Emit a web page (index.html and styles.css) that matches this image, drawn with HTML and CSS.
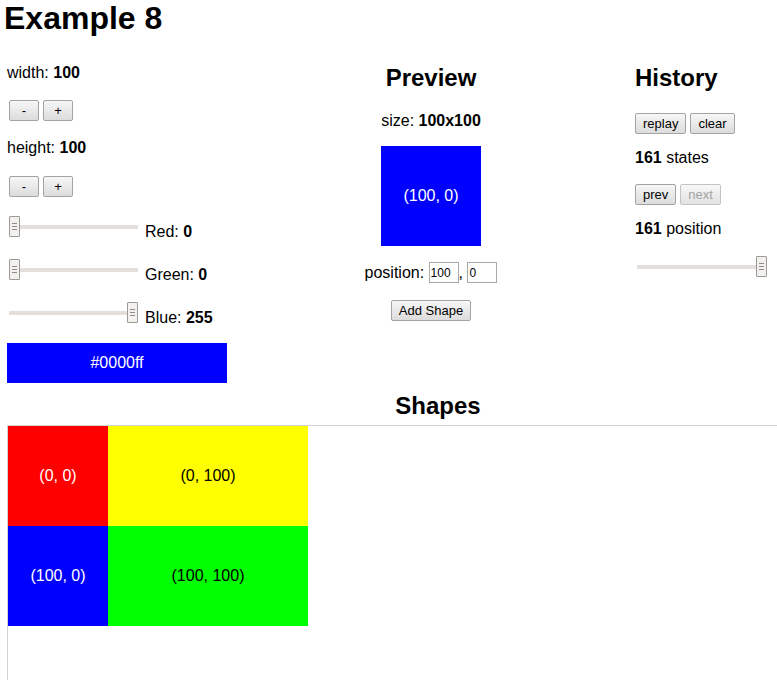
FILE: index.html
```html
<!DOCTYPE html>
<html lang="en">
<head>
<meta charset="utf-8">
<title>Example 8</title>
<link rel="stylesheet" href="styles.css">
</head>
<body>
<h1 class="title">Example 8</h1>
<div class="controls">
  <div class="col col-left">
    <p class="line">width: <b>100</b></p>
    <div class="btns btns-inset">
      <button class="btn btn-fixed">-</button>
      <button class="btn btn-fixed">+</button>
    </div>
    <p class="line gap-18">height: <b>100</b></p>
    <div class="btns btns-inset gap-19">
      <button class="btn btn-fixed">-</button>
      <button class="btn btn-fixed">+</button>
    </div>
    <div class="slider-row gap-19">
      <input class="range" type="range" min="0" max="255" value="0">
      <span class="slider-label">Red: <b>0</b></span>
    </div>
    <div class="slider-row gap-22">
      <input class="range" type="range" min="0" max="255" value="0">
      <span class="slider-label">Green: <b>0</b></span>
    </div>
    <div class="slider-row gap-22">
      <input class="range" type="range" min="0" max="255" value="255">
      <span class="slider-label">Blue: <b>255</b></span>
    </div>
    <div class="swatch">#0000ff</div>
  </div>

  <div class="col col-center">
    <h2 class="heading">Preview</h2>
    <p class="line gap-20">size: <b>100x100</b></p>
    <div class="preview-box">(100, 0)</div>
    <div class="position-row">
      <span>position:&nbsp;</span><input class="num" type="text" value="100"><span>,&nbsp;</span><input class="num" type="text" value="0">
    </div>
    <button class="btn add-btn">Add Shape</button>
  </div>

  <div class="col col-right">
    <h2 class="heading">History</h2>
    <div class="btns gap-21">
      <button class="btn">replay</button>
      <button class="btn">clear</button>
    </div>
    <p class="line gap-15"><b>161</b> states</p>
    <div class="btns gap-17">
      <button class="btn">prev</button>
      <button class="btn" disabled>next</button>
    </div>
    <p class="line gap-15"><b>161</b> position</p>
    <input class="range range-history" type="range" min="0" max="161" value="161">
  </div>
</div>

<section class="shapes">
  <h2 class="heading shapes-heading">Shapes</h2>
  <div class="canvas">
    <div class="shape shape-light" style="top:0;left:0;width:100px;height:100px;background:#ff0000">(0, 0)</div>
    <div class="shape shape-dark" style="top:0;left:100px;width:200px;height:100px;background:#ffff00">(0, 100)</div>
    <div class="shape shape-light" style="top:100px;left:0;width:100px;height:100px;background:#0000ff">(100, 0)</div>
    <div class="shape shape-dark" style="top:100px;left:100px;width:200px;height:100px;background:#00ff00">(100, 100)</div>
  </div>
</section>
</body>
</html>
```

FILE: styles.css
```css
html, body {
  margin: 0;
  padding: 0;
  background: #ffffff;
  overflow: hidden;
}

body {
  font-family: "Liberation Sans", Arial, sans-serif;
  font-size: 16px;
  color: #000;
}

.title {
  margin: 0;
  padding-left: 4px;
  font-size: 32px;
  font-weight: bold;
  line-height: 37px;
}

.controls {
  display: grid;
  grid-template-columns: 220px 200px 1fr;
  column-gap: 104px;
  margin-top: 27px;
  padding-left: 7px;
}

.col {
  display: flex;
  flex-direction: column;
  align-items: flex-start;
}

.col-center {
  align-items: center;
  text-align: center;
}

.line {
  margin: 0;
  height: 18px;
  line-height: 18px;
  white-space: nowrap;
}

.heading {
  margin: 0;
  font-size: 24px;
  font-weight: bold;
  line-height: 28px;
}

.gap-15 { margin-top: 15px; }
.gap-17 { margin-top: 17px; }
.gap-18 { margin-top: 18px; }
.gap-19 { margin-top: 19px; }
.gap-20 { margin-top: 20px; }
.gap-21 { margin-top: 21px; }
.gap-22 { margin-top: 22px; }

.btns {
  display: flex;
  gap: 4px;
}

.col-left > .btns:first-of-type {
  margin-top: 18px;
}

.btns-inset {
  padding-left: 2px;
}

.btn {
  box-sizing: border-box;
  height: 21px;
  margin: 0;
  padding: 2px 7px;
  font-family: "Liberation Sans", Arial, sans-serif;
  font-size: 13px;
  line-height: 15px;
  color: #000;
  border: 1px solid #a3a3a3;
  border-radius: 2px;
  background: linear-gradient(#f7f7f7, #e9e9e9 50%, #dcdcdc);
  white-space: nowrap;
}

.btn:disabled {
  color: #a3a3a3;
  border-color: #c3c3c3;
  background: linear-gradient(#f7f7f7, #ededed 50%, #e2e2e2);
}

.btn-fixed {
  width: 30px;
  padding: 2px 0;
}

.slider-row {
  display: flex;
  align-items: flex-end;
  height: 21px;
  gap: 5px;
  white-space: nowrap;
}

.slider-label {
  line-height: 18px;
  margin-bottom: -4px;
}

.range {
  -webkit-appearance: none;
  appearance: none;
  width: 129px;
  height: 21px;
  margin: 0 2px;
  padding: 0;
  background: transparent;
}

.range::-webkit-slider-runnable-track {
  height: 4px;
  background: #e4dfda;
  border: none;
}

.range::-webkit-slider-thumb {
  -webkit-appearance: none;
  appearance: none;
  box-sizing: border-box;
  width: 11px;
  height: 21px;
  margin-top: -8.5px;
  border: 1px solid #9d9a95;
  border-radius: 1px;
  background:
    linear-gradient(#8e8c88, #8e8c88) 2px 6px / 5px 1px no-repeat,
    linear-gradient(#8e8c88, #8e8c88) 2px 9px / 5px 1px no-repeat,
    linear-gradient(#8e8c88, #8e8c88) 2px 12px / 5px 1px no-repeat,
    #f3f1ed;
}

.range-history {
  width: 130px;
  margin-top: 18px;
}

.swatch {
  margin-top: 20px;
  width: 220px;
  height: 40px;
  line-height: 40px;
  text-align: center;
  color: #fff;
  background: #0000ff;
}

.preview-box {
  margin-top: 16px;
  width: 100px;
  height: 100px;
  display: flex;
  align-items: center;
  justify-content: center;
  color: #fff;
  background: #0000ff;
}

.position-row {
  display: flex;
  align-items: center;
  justify-content: center;
  margin-top: 16px;
  height: 21px;
  white-space: nowrap;
}

.num {
  box-sizing: border-box;
  width: 30px;
  height: 21px;
  margin: 0;
  padding: 0 1px;
  font-family: "Liberation Sans", Arial, sans-serif;
  font-size: 12px;
  color: #000;
  border: 1px solid #a9a9a9;
  border-radius: 0;
  background: #fff;
}

.add-btn {
  margin-top: 17px;
}

.shapes {
  width: 862px;
  margin-top: 9px;
  padding-left: 7px;
}

.shapes-heading {
  text-align: center;
}

.canvas {
  position: relative;
  margin-top: 5px;
  height: 300px;
  border-top: 1px solid #d2d2d2;
  border-left: 1px solid #d2d2d2;
}

.shape {
  position: absolute;
  display: flex;
  align-items: center;
  justify-content: center;
}

.shape-light { color: #fff; }
.shape-dark { color: #000; }
```
